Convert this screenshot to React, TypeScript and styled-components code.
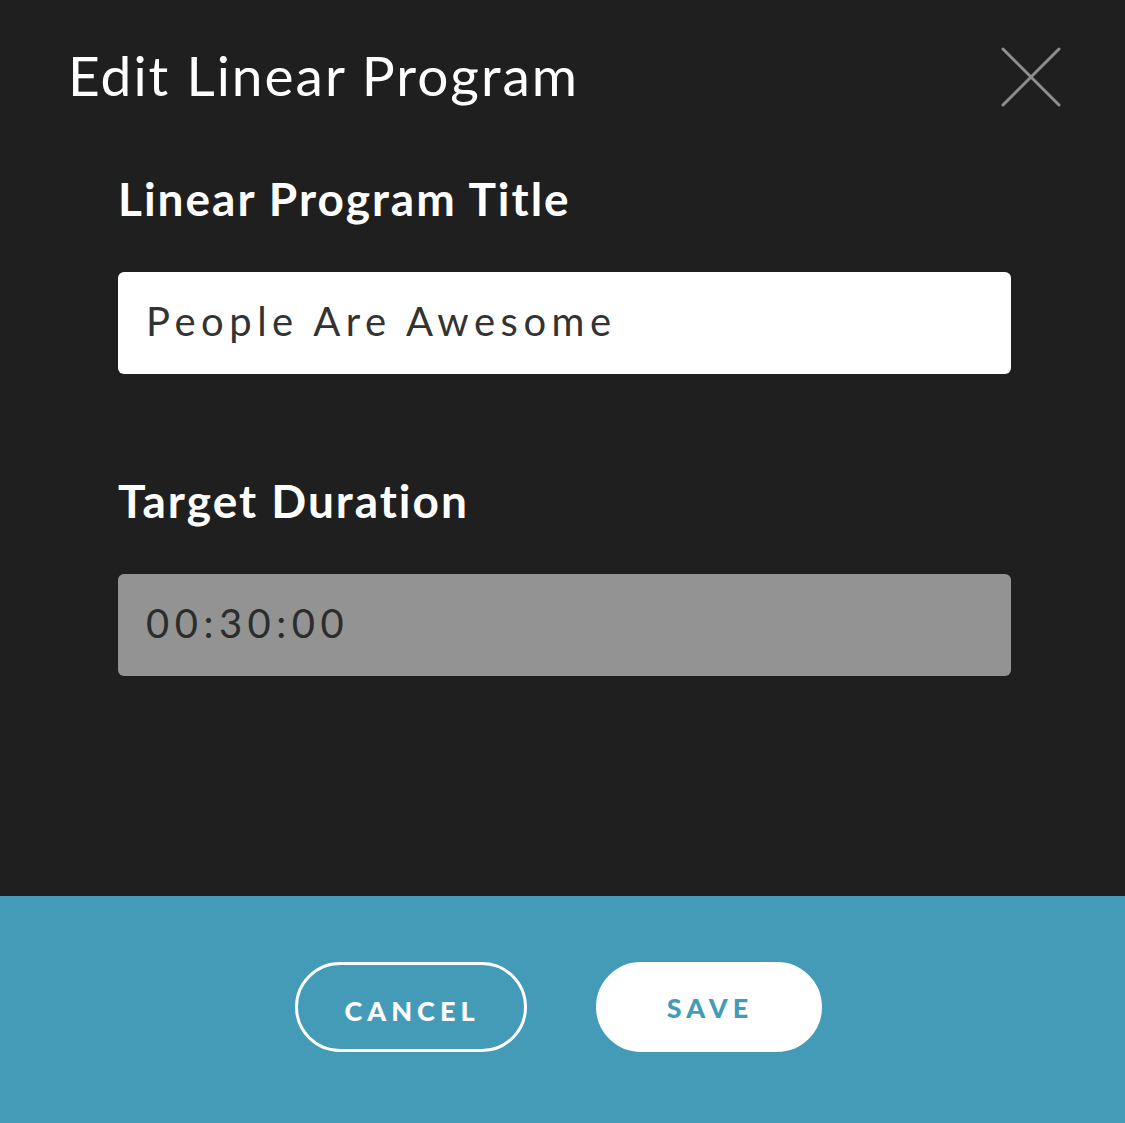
import React from "react";
import styled, { createGlobalStyle } from "styled-components";

const GlobalStyle = createGlobalStyle`
  html, body {
    margin: 0;
    padding: 0;
    background: #1f1f1f;
  }
  * { box-sizing: border-box; }
`;

const Page = styled.div`
  display: flex;
  flex-direction: column;
  width: 1125px;
  height: 1123px;
  background: #1f1f1f;
  font-family: Lato, "Open Sans", sans-serif;
`;

const Main = styled.div`
  flex: 1;
  padding: 48px 64px 0 68px;
`;

const Header = styled.div`
  display: flex;
  justify-content: space-between;
  align-items: flex-start;
`;

const Title = styled.h1`
  margin: 0;
  font-size: 55px;
  line-height: 1;
  font-weight: 400;
  color: #ffffff;
  letter-spacing: 2px;
`;

const CloseButton = styled.button`
  display: flex;
  width: 60px;
  height: 60px;
  padding: 0;
  margin-top: -1px;
  border: none;
  background: transparent;
  cursor: pointer;
`;

const Form = styled.div`
  display: flex;
  flex-direction: column;
  gap: 104px;
  margin: 69px 50px 0 50px;
`;

const Field = styled.div`
  display: flex;
  flex-direction: column;
  gap: 50px;
`;

const Label = styled.label`
  font-size: 46px;
  line-height: 1;
  font-weight: 700;
  color: #ffffff;
  letter-spacing: 2px;
`;

const Input = styled.input<{ $disabled?: boolean }>`
  width: 100%;
  height: 102px;
  padding: 0 28px 4px;
  border: none;
  border-radius: 6px;
  outline: none;
  background: ${(p) => (p.$disabled ? "#939393" : "#ffffff")};
  color: ${(p) => (p.$disabled ? "#2c2c2c" : "#333333")};
  font-family: Lato, "Open Sans", sans-serif;
  font-size: 40px;
  font-weight: 400;
  letter-spacing: 5.5px;
`;

const Footer = styled.div`
  height: 227px;
  background: #449bb8;
  display: flex;
  justify-content: center;
  align-items: flex-start;
  gap: 69px;
  padding: 66px 8px 0 0;
`;

const PillButton = styled.button<{ $primary?: boolean }>`
  height: 90px;
  width: ${(p) => (p.$primary ? "226px" : "232px")};
  border-radius: 45px;
  border: 3px solid #ffffff;
  background: ${(p) => (p.$primary ? "#ffffff" : "transparent")};
  color: ${(p) => (p.$primary ? "#449bb8" : "#ffffff")};
  font-family: Lato, "Open Sans", sans-serif;
  font-size: 27px;
  font-weight: 900;
  letter-spacing: 5px;
  padding: ${(p) => (p.$primary ? "0 0 0 2px" : "6px 0 0 2px")};
  cursor: pointer;
`;

export default function App() {
  return (
    <Page>
      <GlobalStyle />
      <Main>
        <Header>
          <Title>Edit Linear Program</Title>
          <CloseButton aria-label="Close">
            <svg width="60" height="60" viewBox="0 0 60 60">
              <path
                d="M2 2 L58 58 M58 2 L2 58"
                stroke="#8e8e8e"
                strokeWidth="3"
                strokeLinecap="round"
              />
            </svg>
          </CloseButton>
        </Header>
        <Form>
          <Field>
            <Label>Linear Program Title</Label>
            <Input defaultValue="People Are Awesome" />
          </Field>
          <Field>
            <Label>Target Duration</Label>
            <Input $disabled readOnly defaultValue="00:30:00" />
          </Field>
        </Form>
      </Main>
      <Footer>
        <PillButton>CANCEL</PillButton>
        <PillButton $primary>SAVE</PillButton>
      </Footer>
    </Page>
  );
}
